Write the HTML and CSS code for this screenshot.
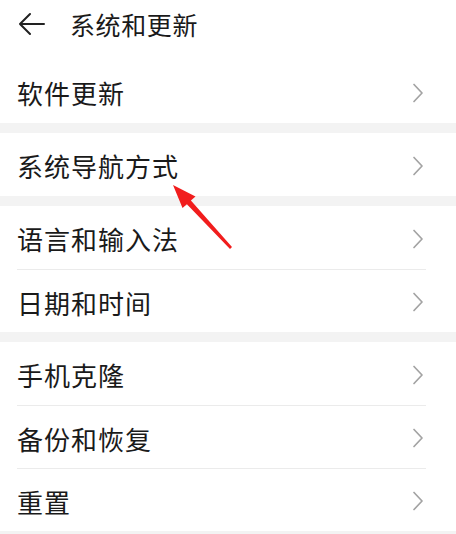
FILE: index.html
```html
<!DOCTYPE html>
<html lang="zh-CN">
<head>
<meta charset="utf-8">
<title>系统和更新</title>
<link rel="stylesheet" href="styles.css">
</head>
<body>
<div class="page">
  <header class="header">
    <svg class="back" width="26" height="24" viewBox="0 0 26 24">
      <path d="M1 12 H25 M11 2 L1 12 L11 22" fill="none" stroke="#222" stroke-width="2" stroke-linecap="round" stroke-linejoin="round"/>
    </svg>
    <span class="title">系统和更新</span>
  </header>

  <section class="group first">
    <div class="row"><span class="label">软件更新</span><svg class="chev" width="12" height="20" viewBox="0 0 12 20"><path d="M2 1.5 L10 10 L2 18.5" fill="none" stroke="#a3a3a3" stroke-width="1.7" stroke-linecap="round" stroke-linejoin="round"/></svg></div>
  </section>
  <section class="group">
    <div class="row"><span class="label">系统导航方式</span><svg class="chev" width="12" height="20" viewBox="0 0 12 20"><path d="M2 1.5 L10 10 L2 18.5" fill="none" stroke="#a3a3a3" stroke-width="1.7" stroke-linecap="round" stroke-linejoin="round"/></svg></div>
  </section>
  <section class="group">
    <div class="row"><span class="label">语言和输入法</span><svg class="chev" width="12" height="20" viewBox="0 0 12 20"><path d="M2 1.5 L10 10 L2 18.5" fill="none" stroke="#a3a3a3" stroke-width="1.7" stroke-linecap="round" stroke-linejoin="round"/></svg></div>
    <div class="row divided"><span class="label">日期和时间</span><svg class="chev" width="12" height="20" viewBox="0 0 12 20"><path d="M2 1.5 L10 10 L2 18.5" fill="none" stroke="#a3a3a3" stroke-width="1.7" stroke-linecap="round" stroke-linejoin="round"/></svg></div>
  </section>
  <section class="group">
    <div class="row"><span class="label">手机克隆</span><svg class="chev" width="12" height="20" viewBox="0 0 12 20"><path d="M2 1.5 L10 10 L2 18.5" fill="none" stroke="#a3a3a3" stroke-width="1.7" stroke-linecap="round" stroke-linejoin="round"/></svg></div>
    <div class="row divided"><span class="label">备份和恢复</span><svg class="chev" width="12" height="20" viewBox="0 0 12 20"><path d="M2 1.5 L10 10 L2 18.5" fill="none" stroke="#a3a3a3" stroke-width="1.7" stroke-linecap="round" stroke-linejoin="round"/></svg></div>
    <div class="row divided"><span class="label">重置</span><svg class="chev" width="12" height="20" viewBox="0 0 12 20"><path d="M2 1.5 L10 10 L2 18.5" fill="none" stroke="#a3a3a3" stroke-width="1.7" stroke-linecap="round" stroke-linejoin="round"/></svg></div>
  </section>

  <svg class="annotation" width="456" height="534" viewBox="0 0 456 534">
    <polygon points="173,185 195.5,196.5 190.9,200.6 232,247 230,249 186.9,204.2 182.5,208" fill="#f11d1d"/>
  </svg>
</div>
</body>
</html>
```

FILE: styles.css
```css
html, body {
  margin: 0;
  padding: 0;
}
body {
  background: #f3f3f3;
  font-family: "Noto Sans CJK SC", "Noto Sans", sans-serif;
  color: #1a1a1a;
}
.page {
  position: relative;
  width: 456px;
  height: 534px;
  overflow: hidden;
}
.header {
  background: #fff;
  height: 48px;
  display: flex;
  align-items: center;
  padding-left: 19px;
}
.back {
  display: block;
}
.title {
  margin-left: 25px;
  font-size: 25px;
  letter-spacing: 0.6px;
  line-height: 1;
}
.group {
  background: #fff;
  margin-bottom: 10px;
}
.group.first {
  padding-top: 12px;
}
.row {
  height: 63px;
  margin: 0 30px 0 17px;
  display: flex;
  align-items: center;
  justify-content: space-between;
  box-sizing: border-box;
}
.row.divided {
  border-top: 1px solid #ebebeb;
}
.label {
  font-size: 26px;
  letter-spacing: 1px;
  line-height: 1;
  padding-top: 3px;
}
.chev {
  display: block;
  margin-right: 2px;
  margin-top: 2px;
}
.annotation {
  position: absolute;
  left: 0;
  top: 0;
  pointer-events: none;
}
```
